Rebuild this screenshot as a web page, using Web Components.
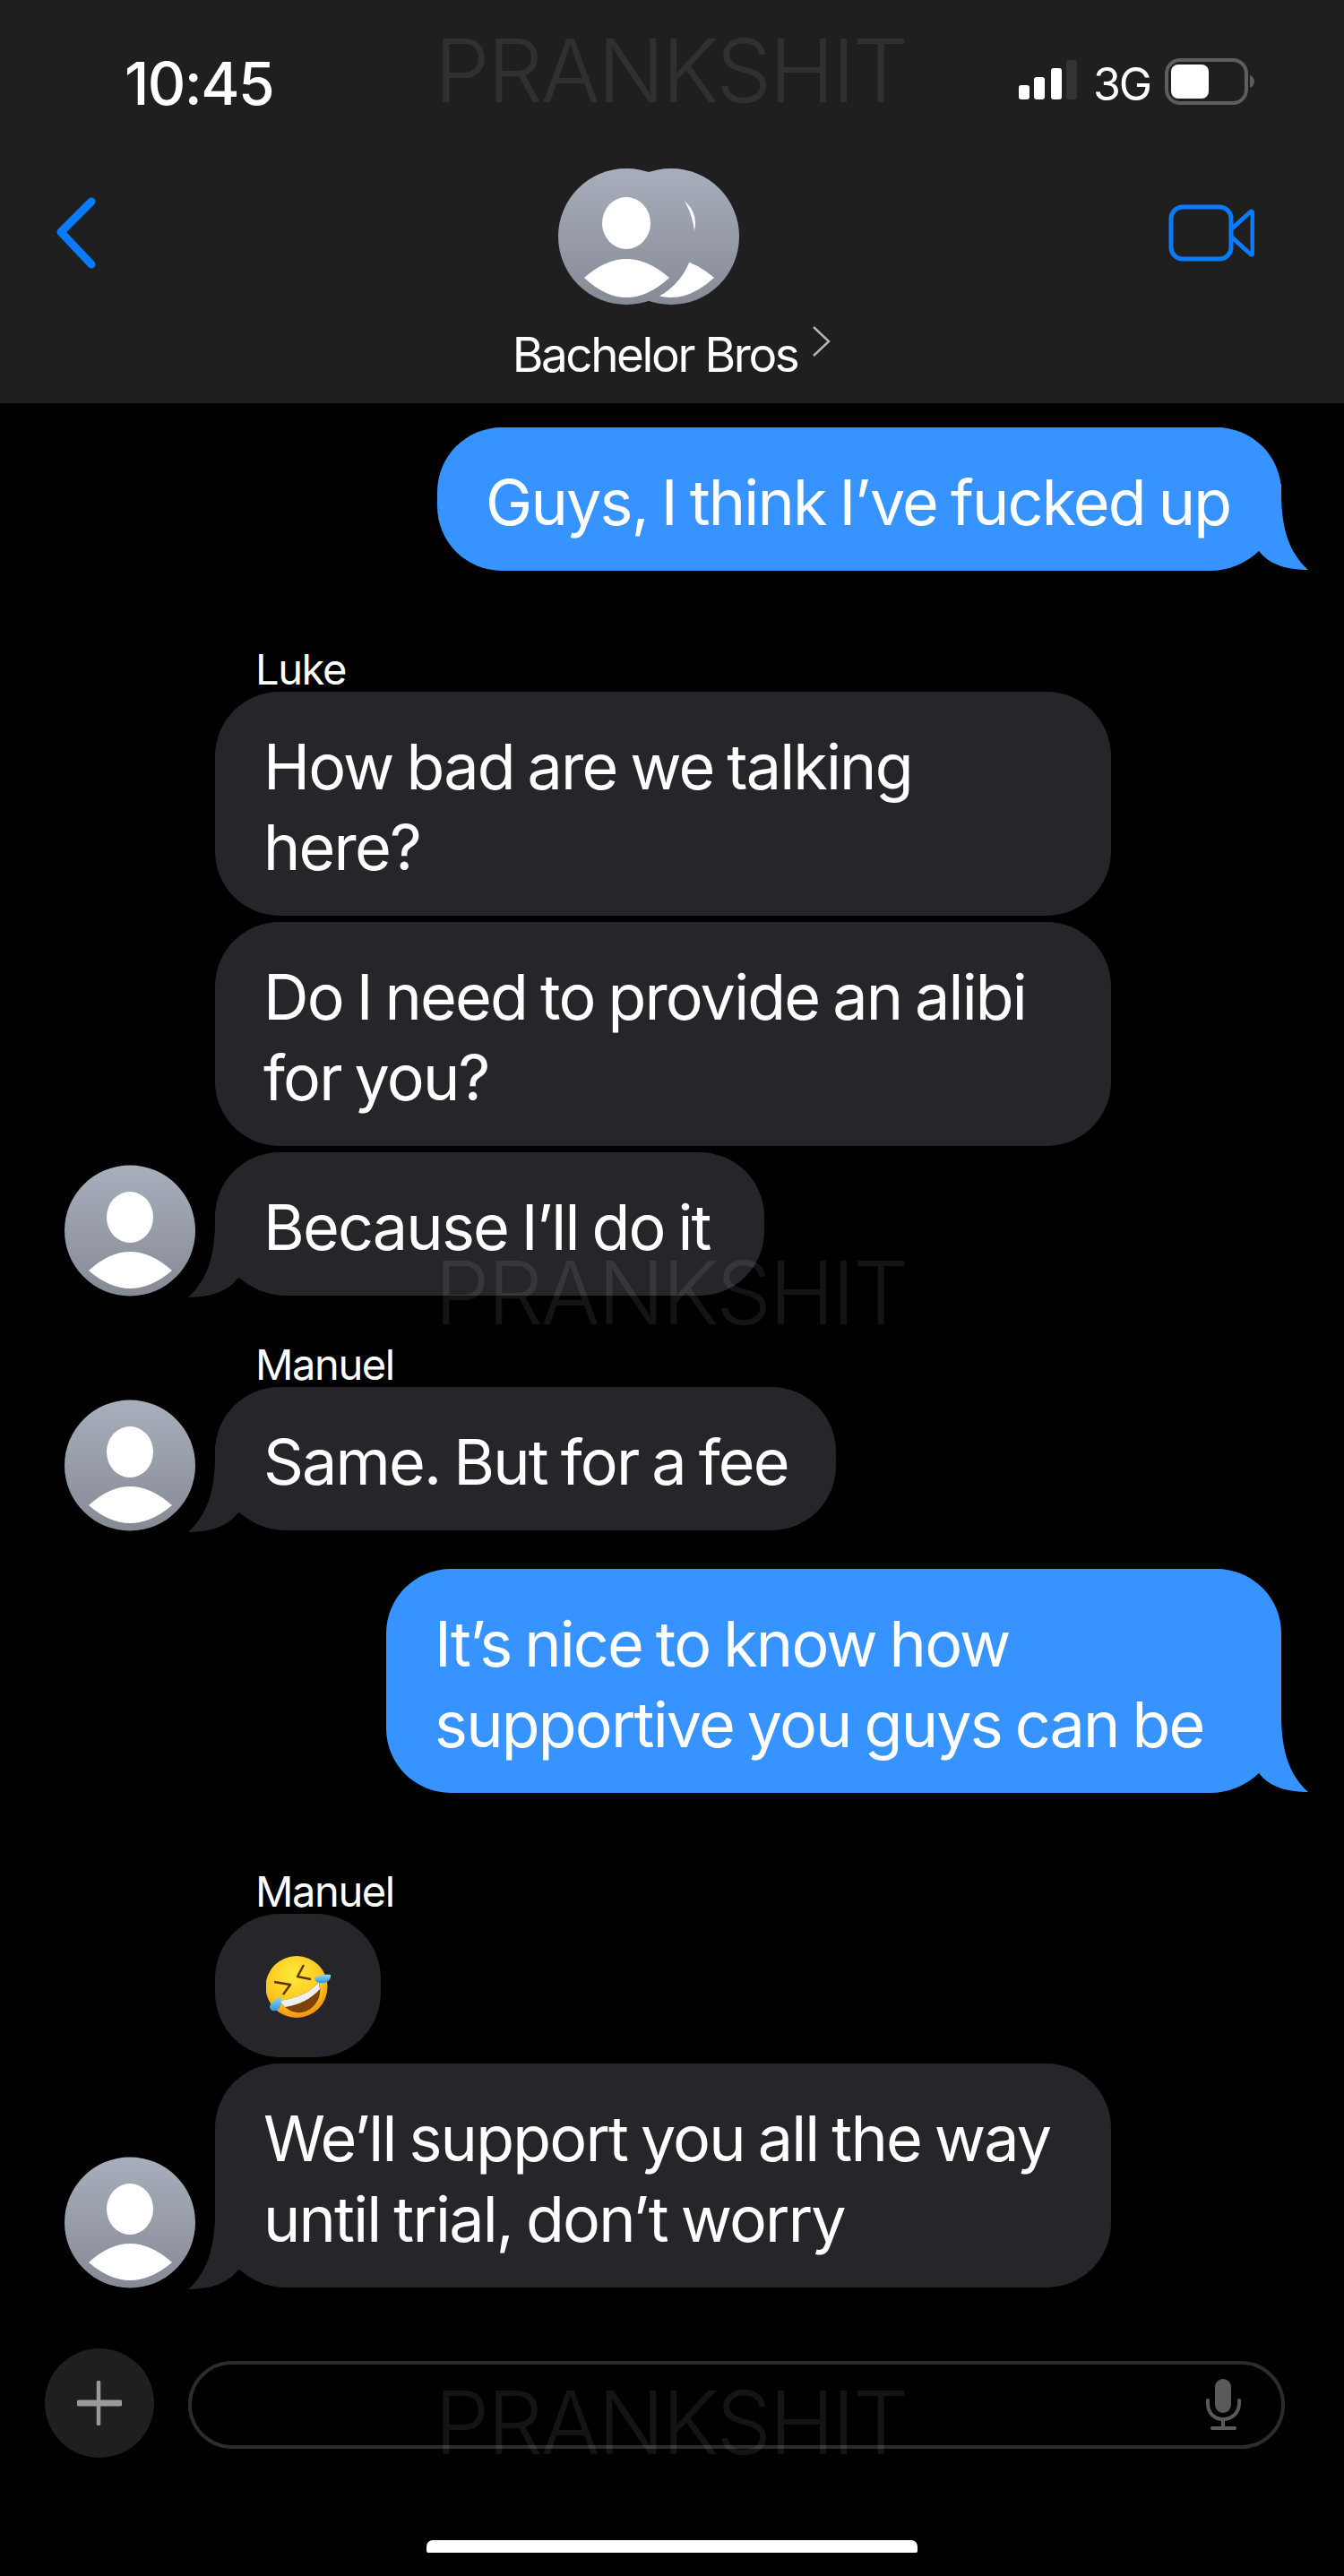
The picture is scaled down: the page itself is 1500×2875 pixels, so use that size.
<!DOCTYPE html>
<html>
<head>
<meta charset="utf-8">
<title>Bachelor Bros</title>
<style>
  html, body { margin: 0; background: #000; }
  body { width: 1500px; height: 2875px; position: relative; overflow: hidden; color: #fff; font-family: "Inter", "Liberation Sans", sans-serif; }
  sms-log { margin-top: 27px; }
</style>
</head>
<body>
<sms-header name="Bachelor Bros"></sms-header>
<sms-log>
  <sms-row side="out" top="0"><sms-bubble side="out" tail width="942">Guys, I think I’ve fucked up</sms-bubble></sms-row>

  <sms-row top="135" sender="Luke"><sms-bubble width="1000">How bad are we talking<br>here?</sms-bubble></sms-row>
  <sms-row top="7"><sms-bubble width="1000">Do I need to provide an alibi<br>for you?</sms-bubble></sms-row>
  <sms-row top="7" avatar><sms-bubble tail width="613">Because I’ll do it</sms-bubble></sms-row>

  <sms-row top="102" sender="Manuel" avatar><sms-bubble tail width="693">Same. But for a fee</sms-bubble></sms-row>

  <sms-row side="out" top="43"><sms-bubble side="out" tail width="999">It’s nice to know how<br>supportive you guys can be</sms-bubble></sms-row>

  <sms-row top="135" sender="Manuel"><sms-bubble width="185"><sms-rofl></sms-rofl></sms-bubble></sms-row>
  <sms-row top="7" avatar><sms-bubble tail width="1000">We’ll support you all the way<br>until trial, don’t worry</sms-bubble></sms-row>
</sms-log>
<sms-composer></sms-composer>
<sms-watermark top="29"></sms-watermark>
<sms-watermark top="1393"></sms-watermark>
<sms-watermark top="2654"></sms-watermark>

<script>
class SmsHeader extends HTMLElement {
  constructor() {
    super();
    this.attachShadow({mode:'open'}).innerHTML = `<style>
      :host { display:block; height:450px; background:#1f1f1f; box-sizing:border-box; font-family:"Inter","Liberation Sans",sans-serif; }
      .status { display:flex; align-items:flex-start; height:170px; padding:55px 100px 0 139px; box-sizing:border-box; }
      .time { font-size:66px; line-height:76px; font-weight:500; letter-spacing:-1.6px; }
      .right { margin-left:auto; display:flex; align-items:flex-start; margin-top:10px; }
      .net { font-size:50px; line-height:56px; margin:1px 16px 0 17px; width:64px; letter-spacing:-2.2px; }
      .nav { display:flex; justify-content:space-between; padding:0 100px 0 62px; margin-top:18px; height:262px; position:relative; }
      .back { margin-top:32px; }
      .video { margin-top:40px; }
      .who { position:absolute; left:0; right:0; top:0; display:flex; flex-direction:column; align-items:center; }
      .pair { margin-left:-50px; }
      .name { display:flex; align-items:flex-start; margin-top:21px; font-size:53px; line-height:64px; letter-spacing:-2.4px; }
      .name span { position:relative; top:1px; }
      .name svg { margin:0 0 0 16px; }
    </style>
    <div class="status">
      <div class="time">10:45</div>
      <div class="right">
        <svg width="66" height="44" viewBox="0 0 66 44" style="margin-top:2px"><rect x="0" y="28" width="12" height="16" rx="3" fill="#fff"/><rect x="17" y="19" width="12" height="25" rx="3" fill="#fff"/><rect x="36" y="9" width="12" height="35" rx="3" fill="#fff"/><rect x="53" y="0" width="12" height="44" rx="3" fill="#333"/></svg>
        <div class="net">3G</div>
        <svg width="100" height="52" viewBox="0 0 100 52"><rect x="2" y="2" width="89" height="48" rx="15" fill="none" stroke="#5e5e5e" stroke-width="4"/><rect x="7" y="7" width="42" height="38" rx="8" fill="#fff"/><path d="M95 19c3 1 5 4 5 7s-2 6-5 7z" fill="#5e5e5e"/></svg>
      </div>
    </div>
    <div class="nav">
      <svg class="back" width="46" height="80" viewBox="0 0 46 80"><path d="M40 5 6 39 40 75" fill="none" stroke="#0a7aff" stroke-width="9" stroke-linecap="round" stroke-linejoin="round"/></svg>
      <div class="who">
        <svg class="pair" width="204" height="154" viewBox="0 0 204 154">
          <defs>
            <linearGradient id="g" x1="0" y1="0" x2="0" y2="1"><stop offset="0" stop-color="#a9aebc"/><stop offset="1" stop-color="#868a95"/></linearGradient>
            <clipPath id="c1"><circle cx="126" cy="76" r="76"/></clipPath>
          </defs>
          <circle cx="126" cy="76" r="76" fill="url(#g)"/>
          <g clip-path="url(#c1)"><ellipse cx="126" cy="61" rx="27" ry="29" fill="#fff"/><path d="M79 122Q126 80 174 122 126 166 79 122Z" fill="#fff"/></g>
          <circle cx="76" cy="76" r="76" fill="url(#g)"/>
          <ellipse cx="76" cy="61" rx="27" ry="29" fill="#fff"/>
          <path d="M29 122Q76 80 124 122 76 166 29 122Z" fill="#fff"/>
        </svg>
        <div class="name"><span id="n"></span><svg width="22" height="36" viewBox="0 0 22 36"><path d="M2 2 19 18 2 34" fill="none" stroke="#b4b4b4" stroke-width="2.5"/></svg></div>
      </div>
      <svg class="video" width="96" height="64" viewBox="0 0 96 64"><rect x="3" y="3" width="67" height="58" rx="13" fill="none" stroke="#0a7aff" stroke-width="5"/><path d="M71 27 91 9c2-2 3-1 3 2v42c0 3-1 4-3 2L71 37" fill="none" stroke="#0a7aff" stroke-width="5" stroke-linejoin="round"/></svg>
    </div>`;
    this.shadowRoot.getElementById('n').textContent = this.getAttribute('name');
  }
}
customElements.define('sms-header', SmsHeader);

class SmsLog extends HTMLElement {
  constructor() {
    super();
    this.attachShadow({mode:'open'}).innerHTML = `<style>
      :host { display:flex; flex-direction:column; }
    </style><slot></slot>`;
  }
}
customElements.define('sms-log', SmsLog);

class SmsRow extends HTMLElement {
  constructor() {
    super();
    const side = this.getAttribute('side') || 'in';
    const sender = this.getAttribute('sender');
    const avatar = this.hasAttribute('avatar');
    this.attachShadow({mode:'open'}).innerHTML = `<style>
      :host { display:block; margin-top:${this.getAttribute('top') || 0}px; }
      .sender { font-size:47px; line-height:52px; margin:-52px 0 0 285px; letter-spacing:-1.4px; height:52px; position:relative; top:1px; }
      .line { display:flex; align-items:flex-end; }
      .line.in { padding-left:72px; }
      .line.out { justify-content:flex-end; padding-right:70px; }
      .slot { width:146px; height:147px; margin-right:22px; flex:none; position:relative; top:1px; }
    </style>
    ${sender ? `<div class="sender">${sender}</div>` : ''}
    <div class="line ${side}">
      ${side=='in' ? (avatar ? '<sms-avatar class="slot"></sms-avatar>' : '<div class="slot" style="height:0"></div>') : ''}
      <slot></slot>
    </div>`;
  }
}
customElements.define('sms-row', SmsRow);

class SmsAvatar extends HTMLElement {
  constructor() {
    super();
    this.attachShadow({mode:'open'}).innerHTML = `<style>
      :host { display:block; }
      svg { display:block; }
    </style>
    <svg width="146" height="147" viewBox="0 0 146 147">
      <defs><linearGradient id="g" x1="0" y1="0" x2="0" y2="1"><stop offset="0" stop-color="#a9aebc"/><stop offset="1" stop-color="#868a95"/></linearGradient></defs>
      <circle cx="73" cy="73.5" r="73" fill="url(#g)"/>
      <ellipse cx="73" cy="58.5" rx="26" ry="28.5" fill="#fff"/>
      <path d="M27 118Q73 76 120 118 73 158 27 118Z" fill="#fff"/>
    </svg>`;
  }
}
customElements.define('sms-avatar', SmsAvatar);

class SmsBubble extends HTMLElement {
  constructor() {
    super();
    const out = this.getAttribute('side') == 'out';
    const w = this.getAttribute('width');
    const tail = this.hasAttribute('tail');
    const color = out ? '#3693ff' : '#26252a';
    // tail corner gets a wider radius so the notch lands where the tail meets it
    const corner = tail ? (out ? 'border-bottom-right-radius:80px;' : 'border-bottom-left-radius:80px;') : '';
    this.attachShadow({mode:'open'}).innerHTML = `<style>
      :host { display:block; position:relative; isolation:isolate; box-sizing:border-box; background:${color}; color:#fff;
        ${w ? `width:${w}px;` : ''} border-radius:72px; ${corner} padding:39px 54px 31px 54px; font-size:70px; line-height:90px; letter-spacing:-1.82px; word-spacing:-3px; white-space:nowrap; }
      svg { position:absolute; z-index:-1; ${out ? 'right:-30px; bottom:-3px' : 'left:-30px; bottom:-6px'}; }
    </style>
    <slot></slot>
    ${tail ? `<svg width="130" height="100" viewBox="0 0 130 100"><path fill="${color}" d="${out
      ? 'M0 0H100V15C101 50 108 76 130 96 110 96 88 92 75 75L0 50Z'
      : 'M130 0H30V15C29 50 22 76 0 96 20 96 42 92 55 75L130 50Z'}"/></svg>` : ''}`;
  }
}
customElements.define('sms-bubble', SmsBubble);

class SmsRofl extends HTMLElement {
  constructor() {
    super();
    this.attachShadow({mode:'open'}).innerHTML = `<style>
      :host { display:block; height:90px; }
      svg { display:block; position:relative; left:3px; top:8px; }
    </style>
    <svg width="73" height="72" viewBox="0 0 73 72">
      <defs>
        <radialGradient id="f" cx=".45" cy=".3" r=".75"><stop offset="0" stop-color="#ffe83a"/><stop offset=".65" stop-color="#fdc61f"/><stop offset="1" stop-color="#ee8410"/></radialGradient>
        <linearGradient id="d" x1="0" y1="0" x2="0" y2="1"><stop offset="0" stop-color="#8fd8f7"/><stop offset="1" stop-color="#2b97dc"/></linearGradient>
      </defs>
      <circle cx="34" cy="34.5" r="34.5" fill="url(#f)"/>
      <path d="M15 50C36 47 50 40 59 29 63 42 58 56 44 62 32 66 22 60 15 50Z" fill="#7c4206"/>
      <path d="M15 50C36 47 50 40 59 29L60 37C50 48 36 55 21 57Z" fill="#efefef"/>
      <path d="M50 26 35 23 42 10" fill="none" stroke="#5c3606" stroke-width="2.5" stroke-linejoin="round"/>
      <path d="M9 29 27 32 19 43" fill="none" stroke="#5c3606" stroke-width="2.5" stroke-linejoin="round"/>
      <path d="M54 25C58 22 66 20 72 21 73 27 67 31 61 30 57 30 55 28 54 25Z" fill="url(#d)"/>
      <path d="M4 56C6 52 11 48 17 45 18 52 16 60 11 61 7 62 4 60 4 56Z" fill="url(#d)"/>
    </svg>`;
  }
}
customElements.define('sms-rofl', SmsRofl);

class SmsComposer extends HTMLElement {
  constructor() {
    super();
    this.attachShadow({mode:'open'}).innerHTML = `<style>
      :host { display:flex; position:absolute; left:50px; top:2621px; width:1384px; align-items:center; gap:38px; }
      .plus { width:122px; height:122px; border-radius:50%; background:#1f1f1f; display:flex; align-items:center; justify-content:center; flex:none; }
      .field { flex:1; height:98px; margin-top:4px; box-sizing:border-box; border:4.5px solid #2a2c2e; border-radius:49px; display:flex; align-items:center; justify-content:flex-end; padding-right:42px; }
      .home { position:absolute; left:426px; top:214px; width:548px; height:14px; background:#fff; border-radius:7px 7px 2px 2px; }
    </style>
    <div class="plus"><svg width="50" height="50" viewBox="0 0 50 50"><path d="M24 2V48" stroke="#9a9a9a" stroke-width="4.5" stroke-linecap="round"/><path d="M2 25H48" stroke="#9a9a9a" stroke-width="7" stroke-linecap="round"/></svg></div>
    <div class="field">
      <svg width="44" height="60" viewBox="0 0 44 60"><rect x="12" y="1" width="18" height="38" rx="9" fill="#5a5a5a"/><path d="M4 25V28C4 40 12 46 21 46S39 40 39 28V25" fill="none" stroke="#5a5a5a" stroke-width="4" stroke-linecap="round"/><path d="M21 46V55" stroke="#5a5a5a" stroke-width="4"/><rect x="7" y="54" width="29" height="4" rx="2" fill="#5a5a5a"/></svg>
    </div>
    <div class="home"></div>`;
  }
}
customElements.define('sms-composer', SmsComposer);

class SmsWatermark extends HTMLElement {
  constructor() {
    super();
    this.attachShadow({mode:'open'}).innerHTML = `<style>
      :host { display:block; position:absolute; left:485px; top:${this.getAttribute('top')}px; font:300 98px/100px "Inter","Liberation Sans",sans-serif; letter-spacing:-2.5px; color:rgba(255,255,255,.08); pointer-events:none; white-space:nowrap; }
    </style>PRANKSHIT`;
  }
}
customElements.define('sms-watermark', SmsWatermark);
</script>
</body>
</html>
